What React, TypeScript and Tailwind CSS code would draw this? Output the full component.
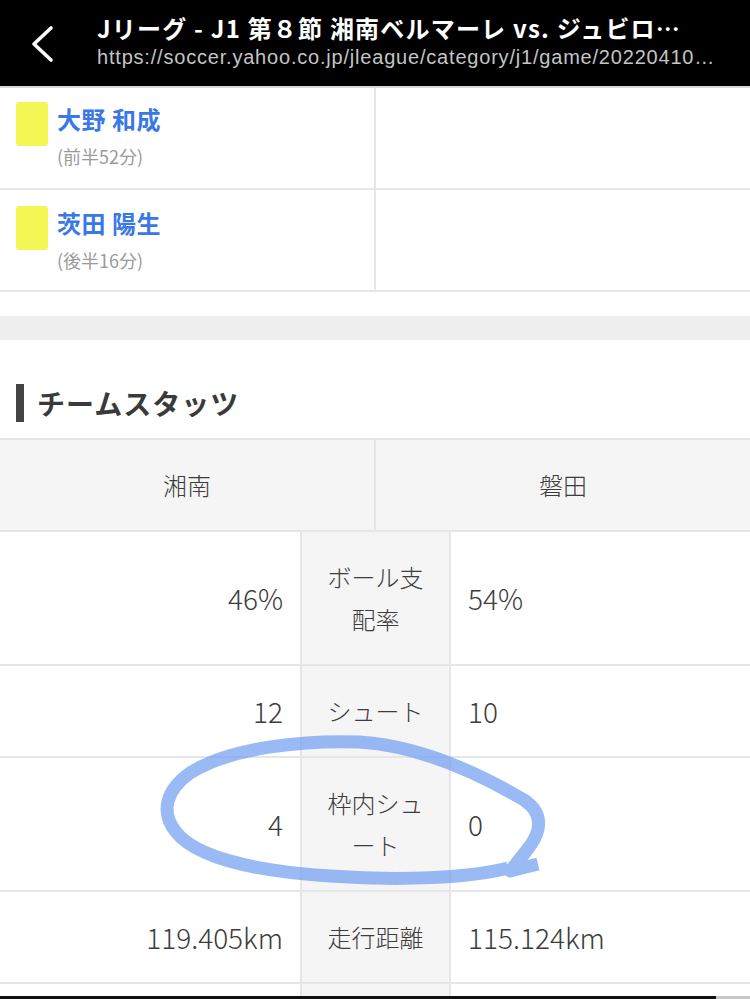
import React from "react";

const jp = { fontFamily: '"Noto Sans CJK JP", "Noto Sans", sans-serif' };

function CardRow({ name, time, top }: { name: string; time: string; top: string }) {
  return (
    <div className="grid grid-cols-[374px_2px_374px] border-b-2 border-[#e6e6e6]">
      <div className={`flex gap-[9px] pl-4 ${top} h-[100px]`}>
        <div className="w-8 h-11 rounded-[3px] bg-[#f5f553] shrink-0" />
        <div className="flex flex-col">
          <div className="text-[24px] leading-[34px] font-bold text-[#3a78e6] tracking-[0.5px]">{name}</div>
          <div className="text-[18px] leading-[26px] text-[#9a9a9a] mt-[7px]">{time}</div>
        </div>
      </div>
      <div className="bg-[#e6e6e6]" />
      <div />
    </div>
  );
}

function StatRow({ l, c, r }: { l: string; c: React.ReactNode; r: string }) {
  return (
    <div className="grid grid-cols-[300px_2px_147px_2px_299px] border-b-2 border-[#e6e6e6] text-[24px] leading-[42px] text-[#3c3c3c] font-light">
      <div className="flex items-center justify-end pr-[17px] py-6 text-[28px]">{l}</div>
      <div className="bg-[#e6e6e6]" />
      <div className="flex items-center justify-center py-6 bg-[#f5f5f5] text-center px-[22px]">{c}</div>
      <div className="bg-[#e6e6e6]" />
      <div className="flex items-center pl-[17px] py-6 text-[28px]">{r}</div>
    </div>
  );
}

export default function App() {
  return (
    <div className="relative w-[750px] h-[999px] overflow-hidden bg-white" style={jp}>
      <div className="h-[86px] bg-black flex items-start">
        <svg width="30" height="40" viewBox="0 0 30 40" className="ml-[28px] mt-[24px] shrink-0">
          <path d="M23 4 L6 20 L23 36" fill="none" stroke="white" strokeWidth="3.6" strokeLinecap="round" strokeLinejoin="round" />
        </svg>
        <div className="ml-[39px] flex flex-col">
          <div className="mt-[12px] text-[24px] leading-[32px] font-bold text-white whitespace-nowrap tracking-[1.2px]">
            Jリーグ - J1 第８節 湘南ベルマーレ vs. ジュビロ…
          </div>
          <div className="mt-[1px] text-[20px] leading-[24px] text-[#c4c4c4] whitespace-nowrap tracking-[0.8px]" style={{ fontFamily: '"Liberation Sans", Arial, sans-serif' }}>
            https://soccer.yahoo.co.jp/jleague/category/j1/game/20220410…
          </div>
        </div>
      </div>
      <div className="h-[2px] bg-[#d8d8d8]" />
      <CardRow name="大野 和成" time="(前半52分)" top="pt-[14px]" />
      <CardRow name="茨田 陽生" time="(後半16分)" top="pt-[16px]" />
      <div className="h-[24px]" />
      <div className="h-[24px] bg-[#eeeeee]" />
      <div className="h-[98px] flex items-start pl-4 pt-[44px]">
        <div className="w-2 h-[38px] bg-[#444]" />
        <div className="ml-[13px] text-[28px] leading-[38px] font-bold text-[#3a3a3a] tracking-[1px]">チームスタッツ</div>
      </div>
      <div className="border-t-2 border-b-2 border-[#e6e6e6] grid grid-cols-[374px_2px_374px] bg-[#f5f5f5] text-[24px] text-[#3c3c3c] font-light h-[94px]">
        <div className="flex items-center justify-center">湘南</div>
        <div className="bg-[#e6e6e6]" />
        <div className="flex items-center justify-center">磐田</div>
      </div>
      <StatRow l="46%" c="ボール支配率" r="54%" />
      <StatRow l="12" c="シュート" r="10" />
      <StatRow l="4" c="枠内シュート" r="0" />
      <StatRow l="119.405km" c="走行距離" r="115.124km" />
      <div className="grid grid-cols-[300px_2px_147px_2px_299px] h-[20px]">
        <div />
        <div className="bg-[#e6e6e6]" />
        <div className="bg-[#f5f5f5]" />
        <div className="bg-[#e6e6e6]" />
        <div />
      </div>
      <div className="absolute left-0 right-0 top-[996px] h-[3px] bg-[#111] flex justify-end">
        <div className="w-[34px] h-[3px] bg-[#c8c8c8]" />
      </div>
      <svg className="absolute left-0 top-0 pointer-events-none" width="750" height="999" viewBox="0 0 750 999">
        <path
          d="M 508 868 C 470 878 400 881 330 876 C 250 871 195 856 176 832 C 160 812 166 790 190 773 C 230 748 300 740 360 742 C 420 746 480 774 524 800 C 545 814 540 832 530 846 C 521 858 514 866 510 871 L 538 864"
          fill="none"
          stroke="#6f9cf2"
          strokeOpacity="0.7"
          strokeWidth="13"
          strokeLinecap="butt"
          strokeLinejoin="round"
        />
      </svg>
    </div>
  );
}
